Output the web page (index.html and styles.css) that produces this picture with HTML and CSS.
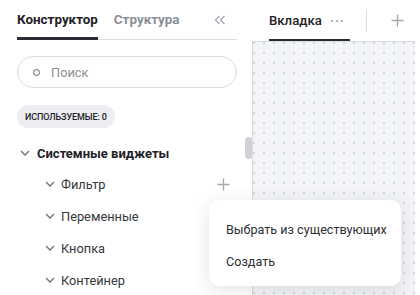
FILE: index.html
```html
<!DOCTYPE html>
<html lang="ru">
<head>
<meta charset="utf-8">
<link rel="stylesheet" href="styles.css">
</head>
<body>
<div class="app">
  <aside class="side">
    <div class="side-tabs">
      <div class="stab active">Конструктор</div>
      <div class="stab">Структура</div>
      <div class="collapse">
        <svg width="12" height="10" viewBox="0 0 12 10"><path d="M5.5 1 L1.5 5 L5.5 9 M10.5 1 L6.5 5 L10.5 9" fill="none" stroke="#a3a7b0" stroke-width="1.3"/></svg>
      </div>
    </div>
    <div class="search">
      <span class="search-ico"></span>
      <span class="search-ph">Поиск</span>
    </div>
    <div class="badge">ИСПОЛЬЗУЕМЫЕ: 0</div>
    <div class="tree">
      <div class="group">
        <svg class="chev" width="10" height="6" viewBox="0 0 10 6"><path d="M1 1 L5 5 L9 1" fill="none" stroke="#6b6e76" stroke-width="1.3"/></svg>
        <span>Системные виджеты</span>
      </div>
      <div class="item">
        <svg class="chev" width="10" height="6" viewBox="0 0 10 6"><path d="M1 1 L5 5 L9 1" fill="none" stroke="#6b6e76" stroke-width="1.3"/></svg>
        <span class="label">Фильтр</span>
        <svg class="add" width="13" height="13" viewBox="0 0 13 13"><path d="M6.5 0.5 V12.5 M0.5 6.5 H12.5" stroke="#a4a7b0" stroke-width="1.3"/></svg>
      </div>
      <div class="item">
        <svg class="chev" width="10" height="6" viewBox="0 0 10 6"><path d="M1 1 L5 5 L9 1" fill="none" stroke="#6b6e76" stroke-width="1.3"/></svg>
        <span class="label">Переменные</span>
      </div>
      <div class="item">
        <svg class="chev" width="10" height="6" viewBox="0 0 10 6"><path d="M1 1 L5 5 L9 1" fill="none" stroke="#6b6e76" stroke-width="1.3"/></svg>
        <span class="label">Кнопка</span>
      </div>
      <div class="item">
        <svg class="chev" width="10" height="6" viewBox="0 0 10 6"><path d="M1 1 L5 5 L9 1" fill="none" stroke="#6b6e76" stroke-width="1.3"/></svg>
        <span class="label">Контейнер</span>
      </div>
    </div>
    <div class="thumb"></div>
  </aside>
  <main class="main">
    <div class="main-tabs">
      <div class="mtab">
        <span>Вкладка</span>
        <span class="more"><i></i><i></i><i></i></span>
      </div>
      <div class="sep"></div>
      <div class="plus">
        <svg width="13" height="13" viewBox="0 0 13 13"><path d="M6.5 0.5 V12.5 M0.5 6.5 H12.5" stroke="#a4a7b0" stroke-width="1.3"/></svg>
      </div>
    </div>
    <div class="canvas"></div>
  </main>
  <div class="menu">
    <div class="menu-item">Выбрать из существующих</div>
    <div class="menu-item">Создать</div>
  </div>
</div>
</body>
</html>
```
FILE: styles.css
```css
* { box-sizing: border-box; }
html, body { margin: 0; padding: 0; background: #fff; }
body { font-family: Roboto, "Noto Sans", sans-serif; color: #2a2c31; }

.app {
  position: relative;
  display: flex;
  width: 420px;
  height: 295px;
  overflow: hidden;
}

.side {
  position: relative;
  width: 252px;
  flex: none;
  padding: 0 15px 0 17px;
}

.side-tabs {
  display: flex;
  align-items: center;
  height: 40px;
  border-bottom: 1px solid #dcdee4;
}
.stab {
  height: 40px;
  display: flex;
  align-items: center;
  font-size: 13.4px;
  font-weight: 700;
  color: #8b8f99;
  margin-right: 16px;
}
.stab.active {
  color: #1f2126;
  box-shadow: inset 0 -3px 0 #2b2d33;
}
.collapse {
  margin-left: auto;
  margin-right: 11px;
  display: flex;
  align-items: center;
}

.search {
  margin-top: 16px;
  height: 32px;
  border: 1px solid #d9dce3;
  border-radius: 16px;
  display: flex;
  align-items: center;
  padding-left: 15px;
}
.search-ico {
  width: 7px;
  height: 7px;
  border: 1.5px solid #5c5f67;
  border-radius: 50%;
  margin-right: 11px;
}
.search-ph {
  font-size: 12.8px;
  color: #8c8f98;
}

.badge {
  display: inline-flex;
  align-items: center;
  margin-top: 17px;
  height: 23px;
  padding: 0 8px;
  border-radius: 12px;
  background: #eceef4;
  font-size: 9px;
  font-weight: 500;
  color: #1f2126;
  letter-spacing: -0.1px;
}

.tree { margin-top: 10px; }
.group {
  display: flex;
  align-items: center;
  height: 30px;
  padding-left: 3px;
  font-size: 13px;
  font-weight: 700;
  color: #1f2126;
}
.group .chev { margin-right: 7px; }
.item {
  display: flex;
  align-items: center;
  height: 32px;
  padding-left: 28px;
  font-size: 12.8px;
  color: #35373d;
}
.item .chev { margin-right: 6px; }
.item .add { margin-left: auto; margin-right: 7px; }

.thumb {
  position: absolute;
  left: 245px;
  top: 137px;
  width: 7px;
  height: 22px;
  border-radius: 4px;
  background: #cfd0d3;
}

.main {
  width: 168px;
  flex: none;
  display: flex;
  flex-direction: column;
}
.main-tabs {
  height: 41px;
  display: flex;
  align-items: center;
  padding-left: 17px;
}
.mtab {
  height: 41px;
  display: flex;
  align-items: center;
  gap: 9px;
  padding-right: 7px;
  font-size: 13.2px;
  font-weight: 500;
  color: #1f2126;
  box-shadow: inset 0 -2px 0 #2b2d33;
}
.more { display: flex; gap: 3px; }
.more i {
  display: block;
  width: 2px;
  height: 2px;
  border-radius: 50%;
  background: #9a9ea7;
}
.sep {
  width: 1px;
  height: 23px;
  background: #d8dbe1;
  margin-left: 16px;
}
.plus {
  margin-left: 24px;
  display: flex;
}

.canvas {
  flex: 1;
  width: 163px;
  background-color: #f3f4f8;
  border-top: 1px solid #d9dce2;
  border-left: 1px solid #d9dce2;
  background-image: radial-gradient(circle at 1px 1px, #d4d6dd 0.7px, transparent 1px);
  background-size: 10px 10px;
  background-position: 10px 10px;
}

.menu {
  position: absolute;
  left: 209px;
  top: 200px;
  width: 192px;
  height: 86px;
  background: #fff;
  border-radius: 10px;
  box-shadow: 0 4px 18px rgba(30, 35, 50, 0.13);
  padding-top: 13px;
}
.menu-item {
  height: 32px;
  display: flex;
  align-items: center;
  padding-left: 17px;
  font-size: 12.6px;
  color: #2e3035;
}
```
